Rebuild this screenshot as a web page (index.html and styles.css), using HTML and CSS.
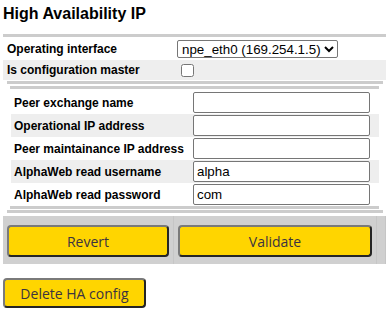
FILE: index.html
```html
<!DOCTYPE html>
<html lang="en">
<head>
    <meta charset="UTF-8">
    <meta name="viewport" content="width=device-width, initial-scale=1.0">
    <title>High Availability IP</title>
    <link rel="stylesheet" href="styles.css">
</head>
<body>

<h1 class="title">High Availability IP</h1>

<div class="panel">
    <div class="bar"></div>

    <div class="row">
        <label class="key" for="iface">Operating interface</label>
        <select id="iface" class="iface">
            <option>npe_eth0 (169.254.1.5)</option>
        </select>
    </div>
    <div class="row alt">
        <label class="key" for="master">Is configuration master</label>
        <input type="checkbox" id="master" class="check">
    </div>

    <!-- peer settings -->
    <div class="sub">
        <div class="bar bar-outer"></div>
        <div class="bar bar-inner"></div>

        <div class="fields">
            <div class="field">
                <label class="key" for="peer-name">Peer exchange name</label>
                <input type="text" id="peer-name" class="text">
            </div>
            <div class="field alt">
                <label class="key" for="op-ip">Operational IP address</label>
                <input type="text" id="op-ip" class="text">
            </div>
            <div class="field">
                <label class="key" for="peer-ip">Peer maintainance IP address</label>
                <input type="text" id="peer-ip" class="text">
            </div>
            <div class="field alt">
                <label class="key" for="aw-user">AlphaWeb read username</label>
                <input type="text" id="aw-user" class="text" value="alpha">
            </div>
            <div class="field">
                <label class="key" for="aw-pass">AlphaWeb read password</label>
                <input type="text" id="aw-pass" class="text" value="com">
            </div>
        </div>

        <div class="bar bar-inner bar-end"></div>
        <div class="bar bar-outer bar-end"></div>
    </div>

    <div class="actions">
        <div class="cell"><button type="button" class="btn">Revert</button></div>
        <div class="cell"><button type="button" class="btn">Validate</button></div>
        <div class="cell"></div>
    </div>
</div>

<button type="button" class="btn btn-delete">Delete HA config</button>

</body>
</html>
```

FILE: styles.css
```css
:root {
    --bar-color: #cccccc;
    --row-alt: #eeeeee;
    --action-bg: #d0d0d0;
    --btn-bg: #ffd500;
    --btn-text: #3b3341;
    --label-font: 'Liberation Sans', Arial, sans-serif;
    --btn-font: 'Open Sans', 'DejaVu Sans', sans-serif;
}

* {
    box-sizing: border-box;
}

body {
    margin: 0;
    padding: 0 0 0 3px;
    font-family: var(--label-font);
    color: #000;
    background: #fff;
}

.title {
    margin: 5px 0 0 0;
    font-size: 16px;
    line-height: 18px;
    font-weight: bold;
}

.panel {
    width: 383px;
    margin-top: 11px;
}

.bar {
    height: 3px;
    background: var(--bar-color);
}

.key {
    font-size: 12px;
    font-weight: bold;
}

/* top level rows */
.row {
    display: grid;
    grid-template-columns: 170px 1fr;
    align-items: center;
    height: 23px;
    padding-left: 4px;
}

.row.alt {
    height: 20px;
    background: var(--row-alt);
}

.iface {
    justify-self: start;
    height: 18px;
    margin-top: 1px;
    padding: 0;
    font-family: var(--label-font);
    font-size: 13.33px;
    line-height: 16px;
    border: 1px solid #767676;
    border-radius: 2px;
    background: #fff;
}

.check {
    width: 13px;
    height: 13px;
    margin: 0 0 0 4px;
}

/* nested peer table */
.sub {
    padding-top: 1px;
}

.bar-outer {
    margin: 0 3px 0 4px;
}

.bar-inner {
    margin: 2px 7px 0 7px;
}

.bar-inner.bar-end {
    margin-top: 0;
}

.bar-outer.bar-end {
    margin-top: 1px;
}

.fields {
    margin: 2px 7px 0 8px;
}

.field {
    display: grid;
    grid-template-columns: 179px 177px;
    align-items: center;
    height: 23px;
    padding-left: 3px;
}

.field.alt {
    background: var(--row-alt);
}

.text {
    width: 177px;
    height: 21px;
    padding: 1px 3px;
    font-family: var(--label-font);
    font-size: 13.33px;
    border: 1px solid #767676;
    border-radius: 2px;
}

/* action buttons */
.actions {
    display: grid;
    grid-template-columns: 171px 203px 9px;
    margin-top: 3px;
    height: 48px;
    background: var(--action-bg);
}

.cell {
    padding: 9px 4px 0 4px;
    border-right: 1px solid #c6c6c6;
}

.btn {
    display: block;
    width: 100%;
    height: 32px;
    font-family: var(--btn-font);
    font-size: 14px;
    color: var(--btn-text);
    background: var(--btn-bg);
    border: 2px solid;
    border-color: #7a7a7a #252525 #252525 #7a7a7a;
    border-radius: 4px;
    cursor: pointer;
}

.btn-delete {
    width: 143px;
    height: 30px;
    margin-top: 14px;
}
```
